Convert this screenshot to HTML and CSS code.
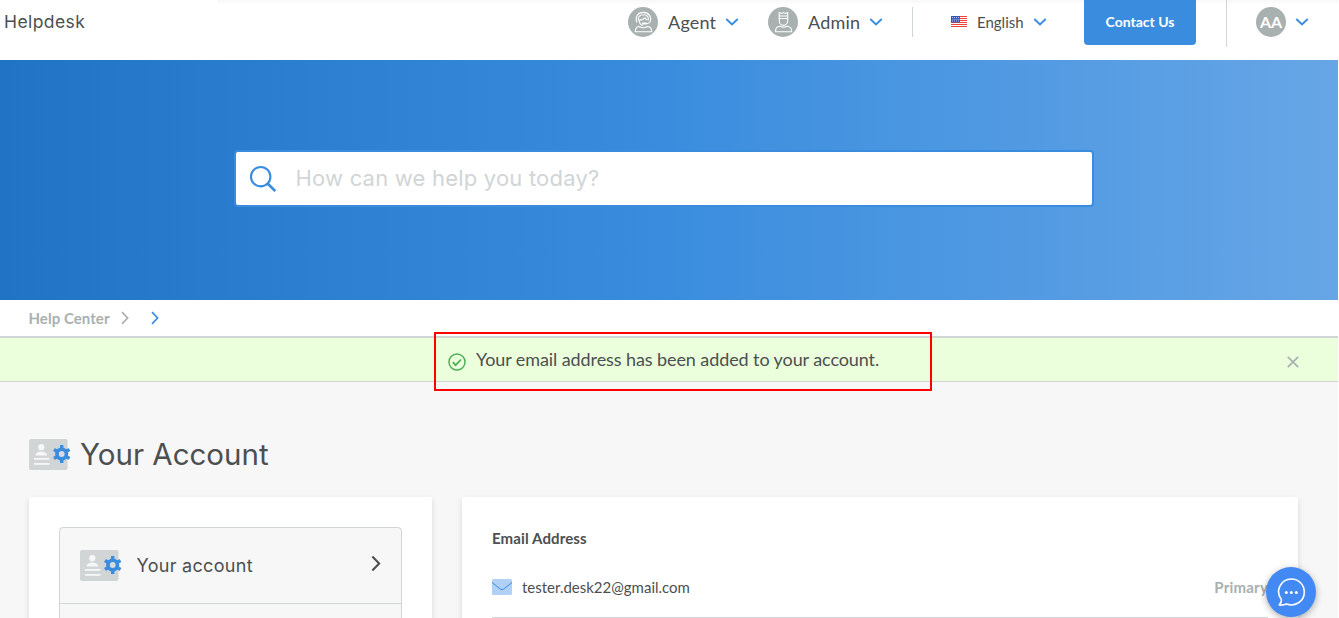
FILE: index.html
```html
<!DOCTYPE html>
<html lang="en">
<head>
<meta charset="utf-8">
<title>Helpdesk</title>
<link rel="stylesheet" href="styles.css">
</head>
<body>
<svg class="defs" width="0" height="0">
  <symbol id="down" viewBox="0 0 14 10"><path d="M1.300 2 7 7.400 12.700 2" fill="none" stroke="currentColor" stroke-width="2"/></symbol>
  <symbol id="right" viewBox="0 0 8 14"><path d="M1 1.200 6.600 7 1 12.800" fill="none" stroke="currentColor" stroke-width="1.700"/></symbol>
  <symbol id="account" viewBox="0 0 42 31">
    <rect width="38.500" height="31" rx="2" fill="#d1d5d6"/>
    <g fill="#f7f7f7"><circle cx="12.300" cy="8.200" r="3.100"/><path d="M6.400 16.500c.5-3 3-4 5.900-4s5.400 1 5.900 4z"/><rect x="5" y="19" width="15.400" height="1.800"/><rect x="5" y="24" width="15.400" height="1.800"/></g>
    <g fill="#3a8dde" transform="translate(32.700 15)"><circle r="6.600"/><rect x="-1.700" y="-9" width="3.400" height="18" rx=".5"/><rect x="-1.700" y="-9" width="3.400" height="18" rx=".5" transform="rotate(60)"/><rect x="-1.700" y="-9" width="3.400" height="18" rx=".5" transform="rotate(120)"/><circle r="2.900" fill="#d7dcdf"/></g>
  </symbol>
</svg>
<div class="page">
  <header class="header">
    <a class="brand">Helpdesk</a>
    <nav class="nav">
      <div class="item agent">
        <svg class="avatar" viewBox="0 0 30 30"><circle cx="15" cy="15" r="15" fill="#a9b0b0"/><g fill="none" stroke="#fff" stroke-width="1.100"><path d="M9 15.500C6.700 9.500 10 5.400 15.300 5.400s9 4.600 6.700 9.600c-.8 1.200-1.700 1.500-3.200 1.700"/><path d="M10.400 13.500c-.8-3.500 1.300-5.700 5-5.700s5.800 2.500 4.700 5.700"/><path d="M11.200 13c2.800 0 4.700-.8 5.700-2.300.6 1.200 1.300 1.900 2.500 2.300M11.200 13c.2 3.300 1.700 5.300 4 5.300"/><path d="M7.300 24.800c0-3.600 1.200-5.300 4.200-5.300 2.200 1.500 5.500 1.500 7.700 0 3 0 4.500 1.700 4.500 5.300z"/></g><rect x="14" y="15.600" width="5" height="2" rx=".8" fill="#fff"/></svg>
        <span>Agent</span><svg class="down"><use href="#down"/></svg>
      </div>
      <div class="item admin">
        <svg class="avatar" viewBox="0 0 30 30"><circle cx="15" cy="15" r="15" fill="#a9b0b0"/><g fill="none" stroke="#fff" stroke-width="1.100"><path d="M11.200 9V5.500l2.200 1 2-1 2 1 2.300-1V9M11.200 9h8.500M11.200 11.500h8.500M11.200 9v4.500c0 2.800 1.800 4.900 4.200 4.900s4.300-2.100 4.300-4.900V9"/><path d="M7.500 24.800c0-3.700 1.200-5.600 4.500-5.600 2.200 1.200 4.700 1.200 6.800 0 3.400 0 4.900 1.900 4.900 5.600z"/></g></svg>
        <span>Admin</span><svg class="down"><use href="#down"/></svg>
      </div>
      <div class="item language">
        <svg class="flag" viewBox="0 0 16 11"><rect width="16" height="11" fill="#fff"/><path d="M0 .5h16M0 2.500h16M0 4.500h16M0 6.500h16M0 8.500h16M0 10.500h16" stroke="#ef4335"/><rect width="9" height="6.500" fill="#3555b5"/><path d="M1 1.500h7M1.500 3.300h7M1 5h7" stroke="#dbe4ff" stroke-width=".8" stroke-dasharray="1 1"/></svg>
        <span>English</span><svg class="down"><use href="#down"/></svg>
      </div>
      <a class="contact">Contact Us</a>
      <div class="item user"><span class="initials">AA</span><svg class="down"><use href="#down"/></svg></div>
    </nav>
  </header>
  <section class="hero">
    <div class="search">
      <svg class="glass" viewBox="0 0 28 28"><g fill="none" stroke="#3a8dde"><circle cx="11.700" cy="11.700" r="9.700" stroke-width="2.100"/><path d="m18.800 18.800 7.500 7.300" stroke-width="2.700"/></g></svg>
      <span class="placeholder">How can we help you today?</span>
    </div>
  </section>
  <nav class="crumbs"><a>Help Center</a><svg class="crumb"><use href="#right"/></svg><svg class="crumb current"><use href="#right"/></svg></nav>
  <div class="notice">
    <svg class="check" viewBox="0 0 18 18"><g fill="none" stroke="#4cb05a"><circle cx="9" cy="9" r="8" stroke-width="1.500"/><path d="m4.800 9.200 2.800 2.900 5.400-5.600" stroke-width="1.800"/></g></svg>
    <span class="message">Your email address has been added to your account.</span>
    <svg class="close" viewBox="0 0 12 12"><path d="m.8.8 10.400 10.400M11.200.8.800 11.200" fill="none" stroke="#a9b0b0" stroke-width="1.700"/></svg>
    <div class="highlight"></div>
  </div>
  <main class="main">
    <h1 class="title"><svg class="account"><use href="#account"/></svg><span>Your Account</span></h1>
    <div class="columns">
      <aside class="card side">
        <div class="menu">
          <a class="row"><svg class="account"><use href="#account"/></svg><span>Your account</span><svg class="go"><use href="#right"/></svg></a>
          <a class="row"></a>
        </div>
      </aside>
      <section class="card emails">
        <h2 class="label">Email Address</h2>
        <div class="email">
          <svg class="mail" viewBox="0 0 20 16"><rect width="20" height="16" rx="1.500" fill="#b0d1f5"/><path d="m0 3.500 8.500 6.600q1.500 1 3 0L20 3.500" fill="none" stroke="#3a8dde"/></svg>
          <span>tester.desk22@gmail.com</span><span class="primary">Primary</span>
        </div>
      </section>
    </div>
  </main>
  <div class="chat"><svg viewBox="0 0 30 30"><path d="M5.300 22.400C-1 14 4.500 2 15.300 2c7.200 0 13 5.600 13 12.900 0 9.600-9.300 15.200-17.900 12.200-2.100.9-4.600 1.200-7.200.9 1.700-1.500 2.400-3.400 2.100-5.600z" fill="none" stroke="#fff" stroke-width="1.600" stroke-linejoin="round"/><g fill="#fff"><circle cx="10.300" cy="15.500" r="1.500"/><circle cx="15.300" cy="15.500" r="1.500"/><circle cx="20.300" cy="15.500" r="1.500"/></g></svg></div>
</div>
</body>
</html>
```
FILE: styles.css
```css
* { box-sizing: border-box; }
body { margin: 0; background: #fff; overflow: hidden; font-family: Lato, sans-serif; color: #4c4f50; }
svg { display: block; flex: none; }
.defs { position: absolute; }
.page { position: relative; width: 1338px; height: 618px; overflow: hidden; }

.header { display: flex; justify-content: space-between; height: 60px; padding-left: 4px; background: linear-gradient(#f8f8f8, #fff) 217px 0 / 1121px 5px no-repeat; }
.brand { padding-top: 11px; font: 17.5px/21px Inter, sans-serif; letter-spacing: .42px; }
.nav { display: flex; align-items: flex-start; }
.item { display: flex; align-items: center; height: 30px; margin-top: 7px; }
.agent, .admin { font-size: 18px; line-height: 30px; letter-spacing: .2px; }
.agent { width: 140px; }
.admin { width: 145px; border-right: 1px solid #d1d5d6; }
.avatar { width: 30px; height: 30px; margin-right: 10px; }
.down { width: 14px; height: 10px; margin-left: 9px; color: #3a8dde; }
.language { width: 171px; padding-left: 38px; font-size: 15px; }
.flag { width: 16px; height: 11px; margin: 0 10px 1px 0; }
.contact { width: 112px; height: 45px; border-radius: 0 0 4px 4px; background: #3a8dde; color: #fff; font-size: 14px; font-weight: 700; line-height: 44px; text-align: center; }
.user { height: 47px; width: 112px; margin: 0 0 0 30px; padding-left: 29px; border-left: 1px solid #d1d5d6; padding-bottom: 3px; }
.initials { width: 30px; height: 30px; border-radius: 50%; background: #a9b0b0; color: #fff; font-size: 16px; font-weight: 700; line-height: 29px; text-align: center; }

.hero { height: 240px; padding: 90px 0 0 234px; background: linear-gradient(90deg, #2174c5, #3a8dde 50%, #66a6e6); }
.search { display: flex; align-items: center; width: 860px; height: 57px; padding-left: 13px; border: 2px solid #3a8dde; border-radius: 4px; background: #fff; color: #d1d5d6; font: 22px/26px Inter, sans-serif; letter-spacing: .2px; }
.placeholder { padding-bottom: 2px; }
.glass { width: 28px; height: 28px; margin-right: 18.500px; }

.crumbs { display: flex; align-items: center; height: 38px; padding-left: 28.500px; border-bottom: 2px solid #d1d5d6; color: #a9b0b0; font-size: 15px; font-weight: 700; letter-spacing: .05px; }
.crumb { width: 8px; height: 14px; margin-left: 11px; }
.current { margin-left: 22px; color: #3a8dde; }

.notice { position: relative; display: flex; align-items: center; height: 44px; padding-left: 448px; border-bottom: 1px solid #d1d5d6; background: #ebffdc; font-size: 18px; }
.check { width: 18px; height: 18px; margin: 4px 10px 0 0; }
.message { padding-bottom: 2px; letter-spacing: -.09px; }
.close { width: 12px; height: 12px; margin: 5px 39.500px 0 auto; }
.highlight { position: absolute; z-index: 1; left: 434px; top: -6px; width: 498px; height: 59px; border: 2px solid #f00; }

.main { height: 236px; padding: 57px 40px 0 29px; background: #f7f7f7; }
.title { display: flex; align-items: center; margin: 0 0 27px; font: 400 29.500px/31px Inter, sans-serif; }
.account { width: 42px; height: 31px; }
.title .account { margin-right: 9px; }
.columns { display: grid; grid-template-columns: 403px 836px; gap: 30px; height: 160px; }
.card { background: #fff; box-shadow: 0 3px 6px rgba(0, 0, 0, .13); }
.side { padding: 30px; }
.menu { width: 343px; border: 1px solid #d1d5d6; border-radius: 4px; background: #f7f7f7; }
.row { display: flex; align-items: center; height: 76px; padding: 0 20px; border-bottom: 1px solid #d1d5d6; font: 18px/22px Inter, sans-serif; letter-spacing: .3px; }
.row .account { margin-right: 14.500px; }
.go { width: 10px; height: 17px; margin: 0 .5px 5px auto; }
.emails { padding: 32px 30px 0; }
.label { margin: 0; font-size: 15px; line-height: 18px; letter-spacing: .12px; }
.email { display: flex; align-items: center; height: 71px; padding-top: 9px; border-bottom: 1px solid #d1d5d6; font-size: 15px; }
.mail { width: 20px; height: 16px; margin-right: 10px; }
.primary { margin-left: auto; color: #a9b0b0; font-weight: 700; letter-spacing: .2px; }
.chat { position: absolute; left: 1266px; top: 567px; width: 50px; height: 50px; padding: 10px; border-radius: 50%; background: #4289f3; box-shadow: 0 2px 7px rgba(0, 0, 0, .32); }
.chat svg { width: 30px; height: 30px; }
```
